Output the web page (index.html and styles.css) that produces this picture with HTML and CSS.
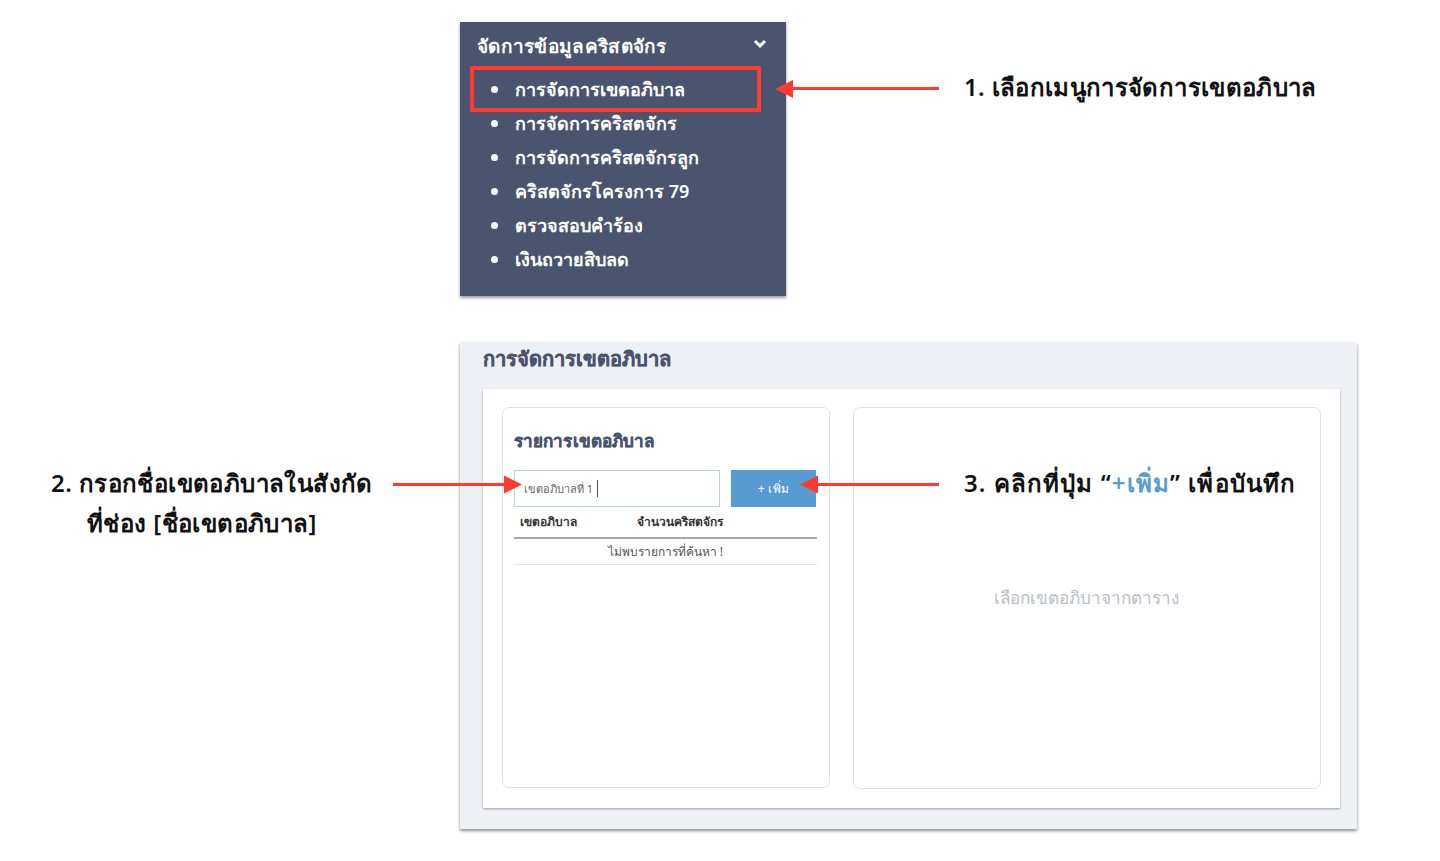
FILE: index.html
```html
<!DOCTYPE html>
<html lang="th">
<head>
    <meta charset="UTF-8">
    <meta name="viewport" content="width=device-width, initial-scale=1.0">
    <title>การจัดการเขตอภิบาล</title>
    <link rel="stylesheet" href="styles.css">
</head>
<body>
    <div class="canvas">
        <div class="menu">
            <div class="menu-head">
                <span>จัดการข้อมูลคริสตจักร</span>
                <svg class="chevron" width="14" height="10" viewBox="0 0 14 10"><path d="M2 2l5 5 5-5" fill="none" stroke="#fff" stroke-width="3"/></svg>
            </div>
            <ul class="menu-list">
                <li>การจัดการเขตอภิบาล</li>
                <li>การจัดการคริสตจักร</li>
                <li>การจัดการคริสตจักรลูก</li>
                <li>คริสตจักรโครงการ 79</li>
                <li>ตรวจสอบคำร้อง</li>
                <li>เงินถวายสิบลด</li>
            </ul>
        </div>
        <div class="red-box"></div>

        <div class="panel">
            <h1 class="panel-title">การจัดการเขตอภิบาล</h1>
            <div class="panel-body">
                <div class="card card-left">
                    <h2 class="card-title">รายการเขตอภิบาล</h2>
                    <div class="add-row">
                        <div class="field"><span>เขตอภิบาลที่ 1</span><i class="caret"></i></div>
                        <button class="add-btn">+ เพิ่ม</button>
                    </div>
                    <div class="table-head">
                        <span class="col-name">เขตอภิบาล</span>
                        <span>จำนวนคริสตจักร</span>
                    </div>
                    <div class="table-empty">ไม่พบรายการที่ค้นหา !</div>
                </div>
                <div class="card card-right">เลือกเขตอภิบาจากตาราง</div>
            </div>
        </div>

        <p class="note note-1">1. เลือกเมนูการจัดการเขตอภิบาล</p>
        <p class="note note-2">2. กรอกชื่อเขตอภิบาลในสังกัด<br><span class="note-indent">ที่ช่อง [ชื่อเขตอภิบาล]</span></p>
        <p class="note note-3">3. คลิกที่ปุ่ม “<span class="note-blue">+เพิ่ม</span>” เพื่อบันทึก</p>

        <svg class="arrows" width="1440" height="861" viewBox="0 0 1440 861">
            <g fill="#ff3b30" stroke="none">
                <rect x="792" y="87" width="147" height="3"/>
                <path d="M775 89l18-9v18z"/>
                <rect x="393" y="483" width="112" height="3"/>
                <path d="M522 484.500l-18-9v18z"/>
                <rect x="816" y="483" width="123" height="3"/>
                <path d="M800 484.500l18-9v18z"/>
            </g>
        </svg>
    </div>
</body>
</html>
```

FILE: styles.css
```css
* {
    box-sizing: border-box;
}
body {
    margin: 0;
    background-color: #ffffff;
    font-family: "Noto Sans", "Liberation Sans", "DejaVu Sans", sans-serif;
}
.canvas {
    position: relative;
    width: 1440px;
    height: 861px;
    overflow: hidden;
}

/* menu */
.menu {
    position: absolute;
    left: 460px;
    top: 22px;
    width: 326px;
    height: 274px;
    background-color: #4a546e;
    color: #ffffff;
    box-shadow: 0 2px 3px rgba(0, 0, 0, 0.4);
    font-weight: 600;
}
.menu-head {
    display: flex;
    justify-content: space-between;
    align-items: center;
    height: 48px;
    padding: 0 19px 0 17px;
    font-size: 19px;
    letter-spacing: 0.3px;
}
.chevron {
    margin-bottom: 4px;
}
.menu-list {
    margin: 2px 0 0;
    padding: 0 0 0 31px;
    font-size: 18px;
    list-style: none;
}
.menu-list li {
    display: flex;
    align-items: center;
    gap: 17px;
    height: 34px;
    line-height: 34px;
}
.menu-list li::before {
    content: "";
    width: 7px;
    height: 7px;
    border-radius: 50%;
    background-color: #ffffff;
}
.red-box {
    position: absolute;
    left: 470px;
    top: 66px;
    width: 291px;
    height: 46px;
    border: 4px solid #ff3b30;
}

/* panel */
.panel {
    position: absolute;
    left: 460px;
    top: 342px;
    width: 897px;
    height: 487px;
    padding: 0 17px 21px 23px;
    display: flex;
    flex-direction: column;
    background-color: #edf0f5;
    box-shadow: 0 2px 3px rgba(0, 0, 0, 0.45);
}
.panel-title {
    margin: 0;
    height: 47px;
    line-height: 34px;
    font-size: 20px;
    font-weight: 600;
    -webkit-text-stroke: 0.4px #4a546e;
    color: #4a546e;
}
.panel-body {
    flex: 1;
    display: flex;
    align-items: flex-start;
    gap: 23px;
    padding: 18px 19px 0;
    background-color: #ffffff;
    box-shadow: 0 1px 2px rgba(0, 0, 0, 0.35);
}
.card {
    background-color: #ffffff;
    border: 1px solid #dfe1e5;
    border-radius: 7px;
}
.card-left {
    width: 328px;
    height: 381px;
    padding: 0 12px 0 11px;
}
.card-right {
    width: 469px;
    height: 382px;
    display: flex;
    justify-content: center;
    padding-top: 176px;
    font-size: 17px;
    font-weight: 300;
    color: #b9bcc6;
}
.card-title {
    margin: 21px 0 17px;
    height: 24px;
    line-height: 24px;
    font-size: 17px;
    font-weight: 600;
    letter-spacing: 0.1px;
    -webkit-text-stroke: 0.4px #4a546e;
    color: #4a546e;
}
.add-row {
    display: flex;
    gap: 11px;
    height: 37px;
}
.field {
    display: flex;
    align-items: center;
    gap: 4px;
    width: 206px;
    padding-left: 9px;
    border: 1px solid #b5d3ef;
    font-size: 11px;
    color: #666666;
}
.caret {
    width: 1px;
    height: 17px;
    background-color: #555555;
}
.add-btn {
    width: 85px;
    border: 0;
    background-color: #589ad2;
    color: #ffffff;
    font-family: inherit;
    font-size: 12px;
    letter-spacing: 0.3px;
    padding: 0;
}
.table-head {
    display: flex;
    height: 32px;
    padding: 0 0 2px 6px;
    align-items: center;
    border-bottom: 2px solid #a9a9a9;
    font-size: 12px;
    font-weight: 700;
    color: #333333;
}
.col-name {
    width: 117px;
}
.table-empty {
    height: 26px;
    line-height: 26px;
    text-align: center;
    border-bottom: 1px solid #e5e5e5;
    font-size: 12px;
    color: #555555;
}

/* notes */
.note {
    position: absolute;
    margin: 0;
    font-size: 24px;
    line-height: 40px;
    font-weight: 600;
    color: #111111;
    white-space: nowrap;
}
.note-1 {
    left: 964px;
    top: 67px;
    letter-spacing: 0.35px;
}
.note-2 {
    left: 51px;
    top: 463px;
    letter-spacing: 0.4px;
}
.note-3 {
    left: 964px;
    top: 463px;
    letter-spacing: 1.1px;
}
.note-indent {
    padding-left: 36px;
}
.note-blue {
    color: #589ad2;
}
.arrows {
    position: absolute;
    left: 0;
    top: 0;
}
```
